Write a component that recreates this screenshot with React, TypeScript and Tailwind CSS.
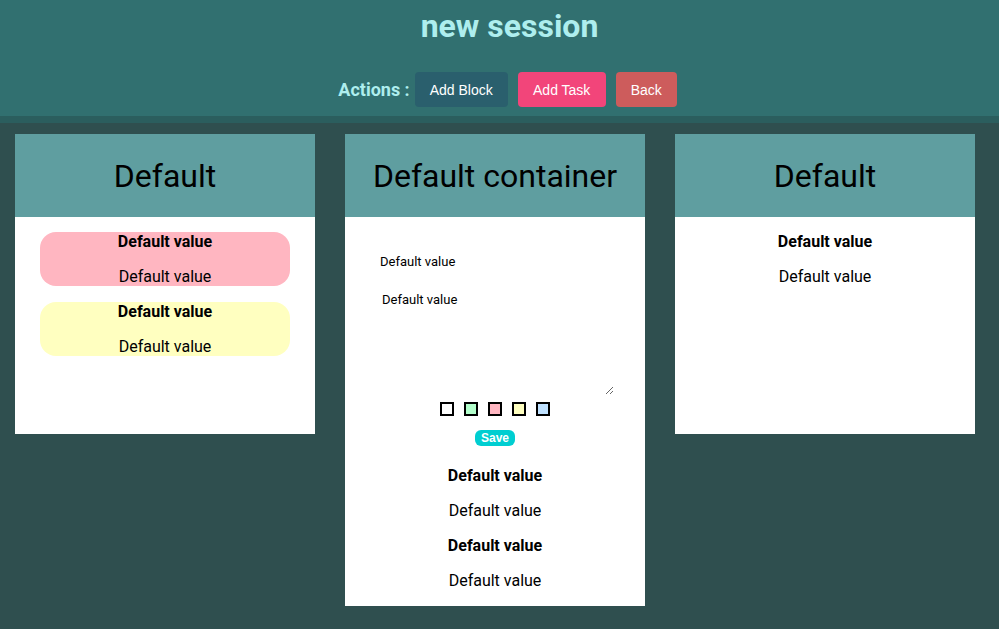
import React from "react";

const Pill = ({ bg }: { bg: string }) => (
  <div className={`mx-[25px] h-[54px] rounded-[16px] flex flex-col items-center ${bg}`}>
    <p className="leading-[19px] text-[16px] font-bold text-black">Default value</p>
    <p className="mt-[16px] leading-[19px] text-[16px] text-black">Default value</p>
  </div>
);

const Pair = ({ first = false }: { first?: boolean }) => (
  <div className={`flex flex-col items-center ${first ? "" : "mt-[16px]"}`}>
    <p className="leading-[19px] text-[16px] font-bold text-black">Default value</p>
    <p className="mt-[16px] leading-[19px] text-[16px] text-black">Default value</p>
  </div>
);

const CardHeader = ({ title }: { title: string }) => (
  <div className="h-[83px] bg-[#5f9ea0] flex items-center justify-center">
    <h2 className="text-[32px] leading-none text-black font-normal">{title}</h2>
  </div>
);

const arial = { fontFamily: "'Liberation Sans', Arial, sans-serif" };

export default function App() {
  return (
    <div className="min-h-screen bg-[#2f4f4f]" style={{ fontFamily: "Roboto, 'Liberation Sans', sans-serif" }}>
      <div className="h-[116px] bg-[#317070] flex flex-col items-center pl-[20px]">
        <h1 className="mt-[8px] text-[32px] leading-[37px] font-bold text-[#aeeeee]">new session</h1>
        <div className="mt-[27px] flex items-center ml-[-4px]">
          <span className="text-[18px] font-bold text-[#aeeeee] mr-[5px]">Actions :</span>
          <button className="h-[35px] w-[93px] rounded-[4px] bg-[#2a5f6d] text-white text-[14px] pt-[1px]" style={arial}>Add Block</button>
          <button className="ml-[10px] h-[35px] w-[88px] rounded-[4px] bg-[#f2457a] text-white text-[14px] pt-[1px]" style={arial}>Add Task</button>
          <button className="ml-[10px] h-[35px] w-[61px] rounded-[4px] bg-[#cd5c5c] text-white text-[14px] pt-[1px]" style={arial}>Back</button>
        </div>
      </div>
      <div className="h-[7px] bg-[#2b5e5e]" />
      <div className="pt-[11px] pl-[15px] flex items-start gap-[30px]">
        <div className="w-[300px] h-[300px] bg-white">
          <CardHeader title="Default" />
          <div className="pt-[15px]">
            <Pill bg="bg-[#ffb6c1]" />
            <div className="mt-[16px]">
              <Pill bg="bg-[#ffffc0]" />
            </div>
          </div>
        </div>
        <div className="w-[300px] bg-white">
          <CardHeader title="Default container" />
          <div className="pb-[16px]">
            <p className="mt-[37px] ml-[35px] text-[13px] leading-[16px] text-black">Default value</p>
            <textarea
              className="block mt-[20px] ml-[35px] w-[234px] h-[105px] p-[2px] text-[13px] leading-[15px] text-black outline-none border-0 resize"
              defaultValue="Default value"
              style={{ fontFamily: "Roboto, sans-serif" }}
            />
            <div className="mt-[7px] flex justify-center gap-[10px]">
              <div className="w-[14px] h-[14px] border-2 border-black bg-white" />
              <div className="w-[14px] h-[14px] border-2 border-black bg-[#b3ffcc]" />
              <div className="w-[14px] h-[14px] border-2 border-black bg-[#ffb6c1]" />
              <div className="w-[14px] h-[14px] border-2 border-black bg-[#ffffc0]" />
              <div className="w-[14px] h-[14px] border-2 border-black bg-[#bfe1ff]" />
            </div>
            <div className="mt-[14px] flex justify-center">
              <button className="h-[16px] w-[40px] rounded-[6px] bg-[#00ced1] text-white text-[12px] font-bold leading-[16px]" style={arial}>Save</button>
            </div>
            <div className="mt-[20px]">
              <Pair first />
              <Pair />
            </div>
          </div>
        </div>
        <div className="w-[300px] h-[300px] bg-white">
          <CardHeader title="Default" />
          <div className="pt-[15px]">
            <Pair first />
          </div>
        </div>
      </div>
    </div>
  );
}
